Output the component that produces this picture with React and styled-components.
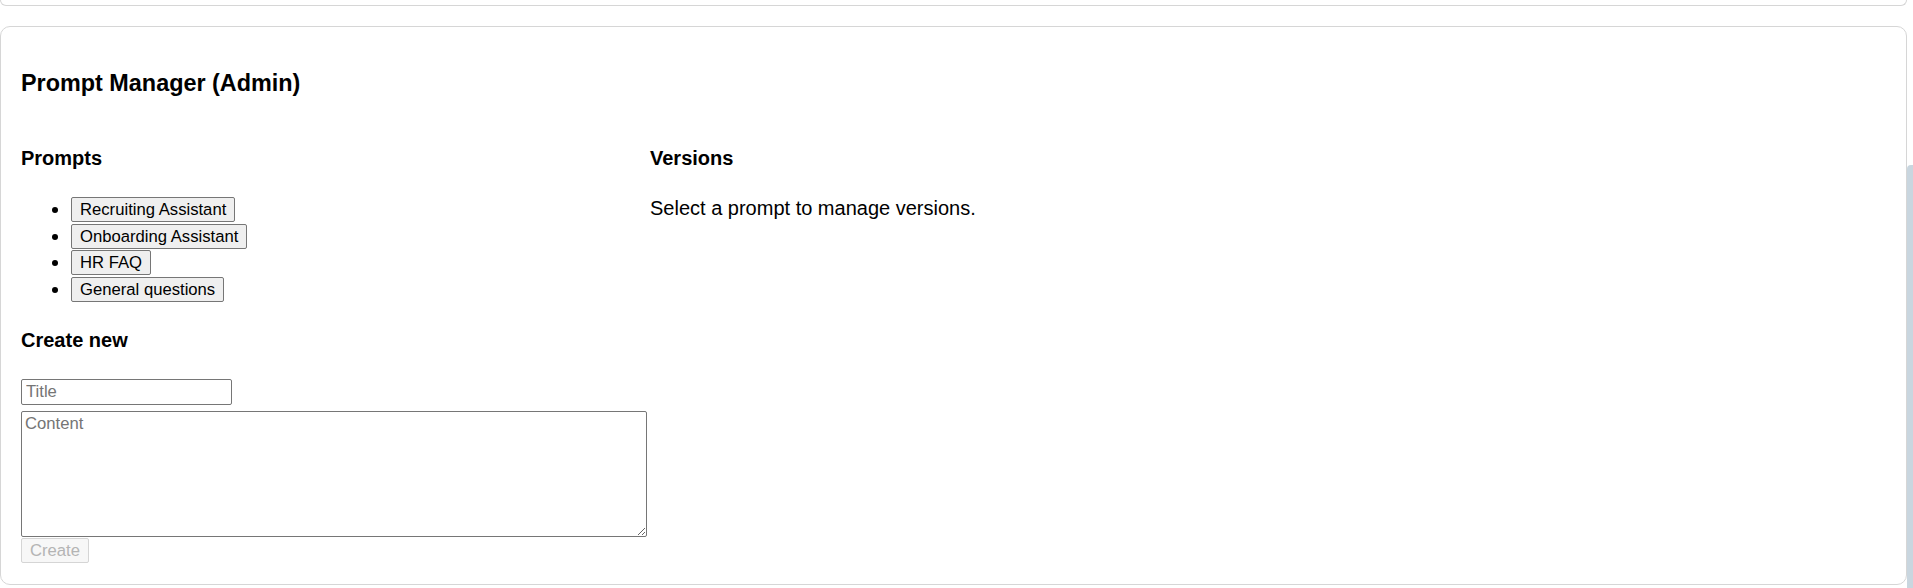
import React from "react";
import styled, { createGlobalStyle } from "styled-components";

const GlobalStyle = createGlobalStyle`
  html, body {
    margin: 0;
    padding: 0;
    background: #ffffff;
  }
  body {
    font-family: "Liberation Sans", Arial, sans-serif;
    color: #000000;
  }
`;

const Page = styled.div`
  display: flex;
  align-items: flex-start;
  min-height: 100vh;
`;

const Main = styled.main`
  flex: 0 0 1907px;
  display: flex;
  flex-direction: column;
  gap: 20px;
`;

const Rail = styled.div`
  flex: 1 1 auto;
  align-self: stretch;
  margin-top: 165px;
  background: #c9d6df;
  border-top-left-radius: 4px;
`;

const CardTail = styled.div`
  height: 5px;
  border: 1px solid #d6d6d6;
  border-top: none;
  border-radius: 0 0 10px 10px;
`;

const Card = styled.section`
  border: 1px solid #d6d6d6;
  border-radius: 10px;
  padding: 20px 20px 21px;
`;

const Title = styled.h3`
  margin: 23px 0 23px;
  font-size: 23.4px;
  line-height: 27px;
  font-weight: 700;
`;

const Columns = styled.div`
  display: grid;
  grid-template-columns: 629px 1fr;
  align-items: start;
`;

const Column = styled.div`
  min-width: 0;
`;

const SectionHeading = styled.h4`
  margin: 26.6px 0 ${(p) => (p.$after ? p.$after : "26.6px")};
  font-size: 20px;
  line-height: 23px;
  font-weight: 700;
`;

const PromptList = styled.ul`
  margin: 26.6px 0;
  padding-left: 50px;
  list-style: disc;
  font-size: 20px;
  line-height: 26.5px;
`;

const PromptItem = styled.li`
  height: 26.5px;
`;

const ActionButton = styled.button`
  box-sizing: border-box;
  height: 25px;
  margin: 1px 0 0;
  padding: 0 8px;
  border: 1px solid #767676;
  border-radius: 2px;
  background: #efefef;
  color: #000000;
  font-family: "Liberation Sans", Arial, sans-serif;
  font-size: 16.67px;
  line-height: 19px;
  vertical-align: top;
  cursor: pointer;

  &:disabled {
    background: #f7f7f7;
    border-color: #d5d5d5;
    color: #b4b4b4;
    cursor: default;
  }
`;

const Form = styled.form`
  display: flex;
  flex-direction: column;
  align-items: flex-start;
`;

const TextInput = styled.input`
  box-sizing: border-box;
  width: 211px;
  height: 26px;
  margin: 0 0 6px;
  padding: 1px 4px;
  border: 1px solid #767676;
  border-radius: 2px;
  font-family: "Liberation Sans", Arial, sans-serif;
  font-size: 16.67px;
  color: #000;

  &::placeholder {
    color: #757575;
  }
`;

const ContentArea = styled.textarea`
  box-sizing: border-box;
  width: 626px;
  height: 126px;
  margin: 0;
  padding: 2px 3px;
  border: 1px solid #767676;
  border-radius: 2px;
  font-family: "Liberation Sans", Arial, sans-serif;
  font-size: 16.67px;
  color: #000;

  &::placeholder {
    color: #757575;
  }
`;

const Note = styled.p`
  margin: 0;
  padding-top: 1px;
  font-size: 20px;
  line-height: 23px;
`;

const prompts = [
  "Recruiting Assistant",
  "Onboarding Assistant",
  "HR FAQ",
  "General questions",
];

export default function App() {
  return (
    <>
      <GlobalStyle />
      <Page>
        <Main>
          <CardTail />
          <Card>
            <Title>Prompt Manager (Admin)</Title>
            <Columns>
              <Column>
                <SectionHeading>Prompts</SectionHeading>
                <PromptList>
                  {prompts.map((p) => (
                    <PromptItem key={p}>
                      <ActionButton type="button">{p}</ActionButton>
                    </PromptItem>
                  ))}
                </PromptList>
                <SectionHeading $after="27.6px">Create new</SectionHeading>
                <Form onSubmit={(e) => e.preventDefault()}>
                  <TextInput placeholder="Title" />
                  <ContentArea placeholder="Content" />
                  <ActionButton type="submit" disabled>
                    Create
                  </ActionButton>
                </Form>
              </Column>
              <Column>
                <SectionHeading>Versions</SectionHeading>
                <Note>Select a prompt to manage versions.</Note>
              </Column>
            </Columns>
          </Card>
        </Main>
        <Rail />
      </Page>
    </>
  );
}
